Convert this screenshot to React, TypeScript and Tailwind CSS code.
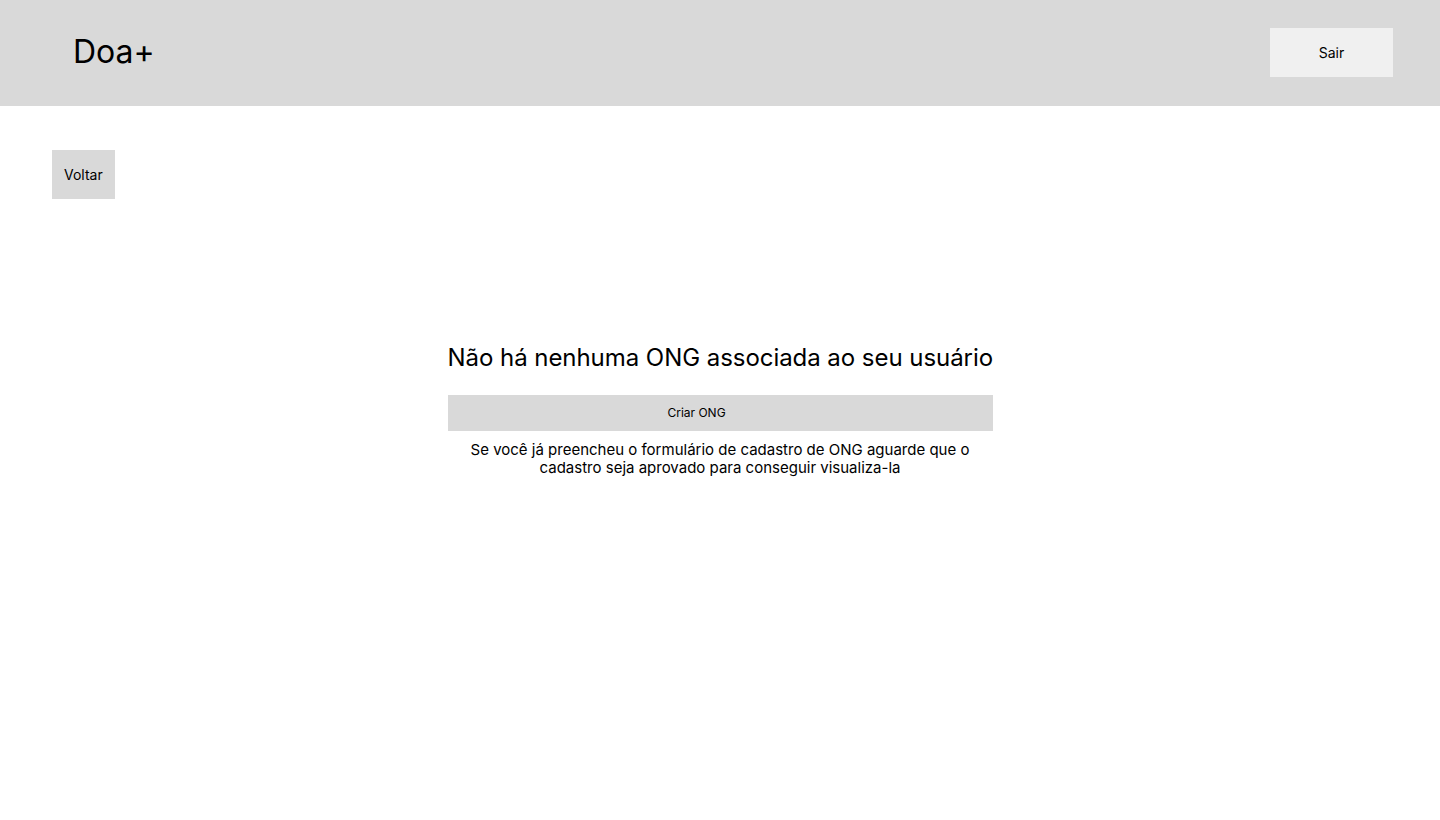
export default function App() {
  return (
    <div className="min-h-screen bg-white text-black" style={{ fontFamily: 'Inter, "Noto Sans", sans-serif' }}>
      {/* Header */}
      <header className="h-[106px] bg-[#d9d9d9] flex items-start justify-between pl-[73px] pr-[47px]">
        <h1 className="mt-[36px] text-[32px] leading-none font-normal">Doa+</h1>
        <button className="mt-[28px] w-[123px] h-[49px] bg-[#f0f0f0] text-sm">Sair</button>
      </header>

      <main className="px-[52px] pt-[44px]">
        <button className="h-[49px] px-3 bg-[#d9d9d9] text-sm">Voltar</button>

        <div className="flex justify-center mt-[144px]">
          <div className="w-[545px] flex flex-col items-stretch">
            <h2 className="text-2xl leading-[29px] text-center whitespace-nowrap tracking-[-0.05px]">
              Não há nenhuma ONG associada ao seu usuário
            </h2>
            <button className="mt-[23px] h-9 pr-[47px] bg-[#d9d9d9] text-xs">Criar ONG</button>
            <p className="mt-[10px] text-[15px] leading-[18px] text-center">
              Se você já preencheu o formulário de cadastro de ONG aguarde que o cadastro seja aprovado para conseguir visualiza-la
            </p>
          </div>
        </div>
      </main>
    </div>
  )
}
